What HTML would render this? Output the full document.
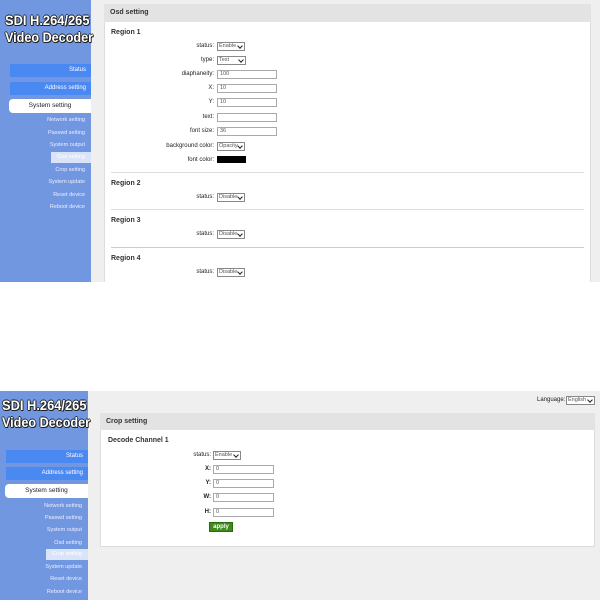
<!DOCTYPE html>
<html><head><meta charset="utf-8"><style>
*{margin:0;padding:0;box-sizing:border-box}
body{width:600px;height:600px;position:relative;background:#fff;font-family:"Liberation Sans",sans-serif;overflow:hidden}
.a{position:absolute}
.sb{background:#7197e1}
.gr{background:#efefef}
.t{color:#fff;font-weight:bold;font-family:"Liberation Sans",sans-serif;text-shadow:-1px 0 #222,1px 0 #222,0 -1px #222,0 1px #222,1px 1px #222;white-space:nowrap;transform-origin:0 0}
.btn{background:#4a88f2;color:#fff;font-size:6px;text-align:right;padding-right:5px;line-height:13px}
.sys{background:#fff;color:#222;font-size:6.5px;text-align:center;line-height:14px;border-radius:4px 0 0 4px}
.sub{font-size:5.5px;color:#eef;text-align:right;white-space:nowrap}
.hl{background:#d9e4f8;color:#fff;font-size:5.5px;text-align:center;line-height:11px}
.panel{background:#fff;border:1px solid #ddd}
.hd{background:#e3e3e3;font-size:7px;font-weight:bold;color:#333;line-height:17px;padding-left:6px}
.lb{font-size:6px;color:#222;text-align:right;white-space:nowrap;line-height:9px}
.rg{font-size:7px;font-weight:bold;color:#333}
.in{border:1px solid #aaa;background:#fff;font-size:5.5px;color:#555;line-height:7px;padding-left:2px}
.sel{border:1px solid #888;background:#fff;font-size:5.5px;color:#555;line-height:7px;padding-left:1px}
.sel:after{content:"";position:absolute;right:2px;top:1px;width:3px;height:3px;border-right:1px solid #222;border-bottom:1px solid #222;transform:rotate(45deg)}
.hr{height:1px;background:#ddd}
</style></head><body>
<!-- TOP -->
<div class="a sb" style="left:0;top:0;width:91px;height:282px"></div>
<div class="a gr" style="left:91px;top:0;width:509px;height:282px"></div>
<div class="a t" style="left:5px;top:12px;font-size:14px;transform:scaleX(0.92)">SDI H.264/265</div>
<div class="a t" style="left:5px;top:29px;font-size:14px;transform:scaleX(0.9)">Video Decoder</div>
<div class="a btn" style="left:10px;top:64px;width:81px">Status</div>
<div class="a btn" style="left:10px;top:82px;width:81px">Address setting</div>
<div class="a sys" style="left:9px;top:99px;width:82px">System setting</div>
<div class="a sub" style="right:515px;top:117px">Network setting</div>
<div class="a sub" style="right:515px;top:130px">Passwd setting</div>
<div class="a sub" style="right:515px;top:142px">System output</div>
<div class="a hl" style="left:51px;top:152px;width:40px">Osd setting</div>
<div class="a sub" style="right:515px;top:167px">Crop setting</div>
<div class="a sub" style="right:515px;top:179px">System update</div>
<div class="a sub" style="right:515px;top:192px">Reset device</div>
<div class="a sub" style="right:515px;top:204px">Reboot device</div>
<div class="a panel" style="left:104px;top:4px;width:487px;height:290px"></div>
<div class="a hd" style="left:104px;top:4px;width:487px;height:18px">Osd setting</div>
<div class="a rg" style="left:111px;top:29px">Region 1</div>
<div class="a lb" style="right:386px;top:42px">status:</div><div class="a sel" style="left:217px;top:42px;width:28px;height:9px">Enable</div>
<div class="a lb" style="right:386px;top:56px">type:</div><div class="a sel" style="left:217px;top:56px;width:29px;height:9px">Text</div>
<div class="a lb" style="right:386px;top:70px">diaphaneity:</div><div class="a in" style="left:217px;top:70px;width:60px;height:9px">100</div>
<div class="a lb" style="right:386px;top:84px">X:</div><div class="a in" style="left:217px;top:84px;width:60px;height:9px">10</div>
<div class="a lb" style="right:386px;top:98px">Y:</div><div class="a in" style="left:217px;top:98px;width:60px;height:9px">10</div>
<div class="a lb" style="right:386px;top:113px">text:</div><div class="a in" style="left:217px;top:113px;width:60px;height:9px"></div>
<div class="a lb" style="right:386px;top:127px">font size:</div><div class="a in" style="left:217px;top:127px;width:60px;height:9px">36</div>
<div class="a lb" style="right:386px;top:142px">background color:</div><div class="a sel" style="left:217px;top:142px;width:28px;height:9px">Opacity</div>
<div class="a lb" style="right:386px;top:156px">font color:</div><div class="a" style="left:217px;top:156px;width:29px;height:7px;background:#000"></div>
<div class="a hr" style="left:111px;top:172px;width:473px"></div>
<div class="a rg" style="left:111px;top:180px">Region 2</div>
<div class="a lb" style="right:386px;top:193px">status:</div><div class="a sel" style="left:217px;top:193px;width:28px;height:9px">Disable</div>
<div class="a hr" style="left:111px;top:209px;width:473px"></div>
<div class="a rg" style="left:111px;top:217px">Region 3</div>
<div class="a lb" style="right:386px;top:230px">status:</div><div class="a sel" style="left:217px;top:230px;width:28px;height:9px">Disable</div>
<div class="a hr" style="left:111px;top:247px;width:473px;background:#ccc"></div>
<div class="a rg" style="left:111px;top:255px">Region 4</div>
<div class="a lb" style="right:386px;top:268px">status:</div><div class="a sel" style="left:217px;top:268px;width:28px;height:9px">Disable</div>
<div class="a" style="left:0;top:282px;width:600px;height:318px;background:#fff"></div>
<!-- BOTTOM -->
<div class="a gr" style="left:88px;top:391px;width:512px;height:209px"></div>
<div class="a sb" style="left:0;top:391px;width:88px;height:209px"></div>
<div class="a t" style="left:2px;top:397px;font-size:14px;transform:scaleX(0.92)">SDI H.264/265</div>
<div class="a t" style="left:2px;top:414px;font-size:14px;transform:scaleX(0.9)">Video Decoder</div>
<div class="a btn" style="left:6px;top:450px;width:82px">Status</div>
<div class="a btn" style="left:6px;top:467px;width:82px">Address setting</div>
<div class="a sys" style="left:5px;top:484px;width:83px">System setting</div>
<div class="a sub" style="right:518px;top:503px">Network setting</div>
<div class="a sub" style="right:518px;top:515px">Passwd setting</div>
<div class="a sub" style="right:518px;top:527px">System output</div>
<div class="a sub" style="right:518px;top:540px">Osd setting</div>
<div class="a hl" style="left:46px;top:549px;width:42px">Crop setting</div>
<div class="a sub" style="right:518px;top:564px">System update</div>
<div class="a sub" style="right:518px;top:576px">Reset device</div>
<div class="a sub" style="right:518px;top:589px">Reboot device</div>
<div class="a lb" style="left:537px;top:396px;font-size:6px">Language:</div>
<div class="a sel" style="left:566px;top:396px;width:29px;height:9px">English</div>
<div class="a panel" style="left:100px;top:413px;width:495px;height:134px"></div>
<div class="a hd" style="left:100px;top:413px;width:495px;height:17px">Crop setting</div>
<div class="a rg" style="left:108px;top:437px">Decode Channel 1</div>
<div class="a lb" style="right:389px;top:451px">status:</div><div class="a sel" style="left:213px;top:451px;width:28px;height:9px">Enable</div>
<div class="a lb" style="right:389px;top:465px;font-weight:bold">X:</div><div class="a in" style="left:213px;top:465px;width:61px;height:9px">0</div>
<div class="a lb" style="right:389px;top:479px;font-weight:bold">Y:</div><div class="a in" style="left:213px;top:479px;width:61px;height:9px">0</div>
<div class="a lb" style="right:389px;top:493px;font-weight:bold">W:</div><div class="a in" style="left:213px;top:493px;width:61px;height:9px">0</div>
<div class="a lb" style="right:389px;top:508px;font-weight:bold">H:</div><div class="a in" style="left:213px;top:508px;width:61px;height:9px">0</div>
<div class="a" style="left:209px;top:522px;width:24px;height:10px;background:#3e8a1c;border:1px solid #2a6a10;color:#fff;font-size:6px;font-weight:bold;text-align:center;line-height:8px">apply</div>
</body></html>
